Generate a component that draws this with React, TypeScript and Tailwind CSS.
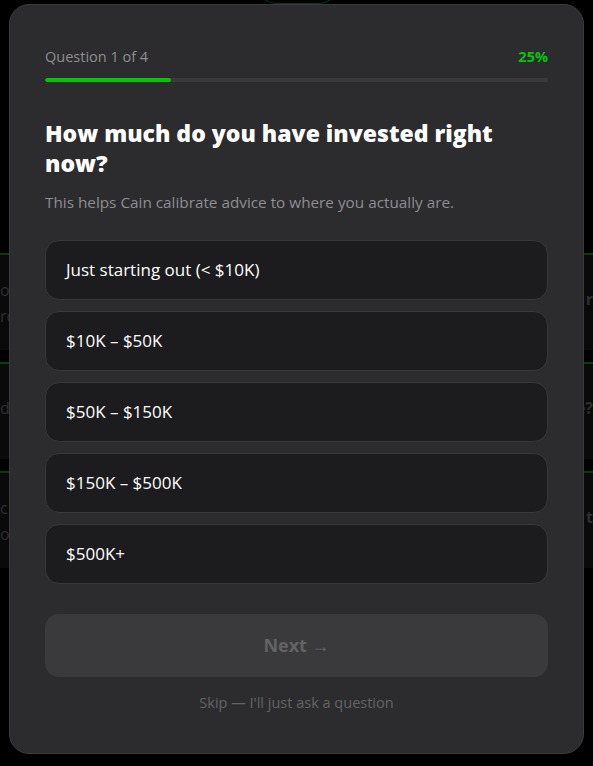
import React from "react";

const options = [
  "Just starting out (< $10K)",
  "$10K \u2013 $50K",
  "$50K \u2013 $150K",
  "$150K \u2013 $500K",
  "$500K+",
];

const bgRows = [
  { l: ["ou", "ro"], r: ["r", ""] },
  { l: ["d", ""], r: ["e?", ""] },
  { l: ["c", "o"], r: ["t", ""] },
];

export default function App() {
  return (
    <div
      className="relative w-[593px] h-[766px] overflow-hidden bg-black"
      style={{ fontFamily: "'Open Sans', 'Noto Sans', sans-serif" }}
    >
      {/* dimmed page behind the dialog */}
      <div className="flex flex-col gap-[12px] pt-[253px]">
        {bgRows.map((row, i) => (
          <div key={i} className="flex justify-between">
            <div className="w-[120px] h-[97px] bg-[#0a0a0a] border-t-2 border-[#0c3a10] flex flex-col justify-center gap-[8px]">
              {row.l.map((t, j) => (
                <span key={j} className="text-[16px] text-[#2e2e30] leading-[18px]">
                  {t}
                </span>
              ))}
            </div>
            <div className="w-[120px] h-[97px] bg-[#0a0a0a] border-t-2 border-[#0c3a10] flex flex-col justify-center items-end gap-[8px]">
              {row.l.map((_, j) => (
                <span key={j} className="text-[16px] text-[#2e2e30] leading-[18px] font-bold">
                  {row.r[j]}
                </span>
              ))}
            </div>
          </div>
        ))}
      </div>
      <div className="absolute left-[255px] -top-[40px] w-[85px] h-[44px] rounded-full border border-[#0c3a10]" />

      {/* dialog */}
      <div className="absolute left-[9px] top-[4px] w-[575px] rounded-[20px] bg-[#2c2c2e] border border-[#3a3a3c] px-[35px] pt-[42px] pb-[40px] flex flex-col">
        <div className="flex justify-between items-center text-[14.5px] leading-[20px]">
          <span className="text-[#8e8e93]">Question 1 of 4</span>
          <span className="text-[#00c805] font-bold">25%</span>
        </div>
        <div className="mt-[11px] h-1 rounded-full bg-[#3a3a3c] overflow-hidden">
          <div className="h-full rounded-full bg-[#00c805]" style={{ width: "25%" }} />
        </div>

        <h1 className="mt-9 text-[23px] leading-[30px] font-extrabold text-white">
          How much do you have invested right now?
        </h1>
        <p className="mt-[13px] text-[15.3px] leading-[22px] text-[#8e8e93]">
          This helps Cain calibrate advice to where you actually are.
        </p>

        <div className="mt-[27px] flex flex-col gap-[11px]">
          {options.map((o) => (
            <button
              key={o}
              className="h-[60px] w-full text-left px-5 rounded-[14px] bg-[#1c1c1e] border border-[#38383a] text-white text-[17px]"
            >
              {o}
            </button>
          ))}
        </div>

        <button className="mt-[30px] h-[63px] w-full rounded-[14px] bg-[#3a3a3c] text-[#636366] text-[18px] font-bold">
          Next <span className="font-normal">→</span>
        </button>

        <div className="mt-4 text-center text-[14.5px] leading-[20px] text-[#636366]">
          Skip — I'll just ask a question
        </div>
      </div>
    </div>
  );
}
